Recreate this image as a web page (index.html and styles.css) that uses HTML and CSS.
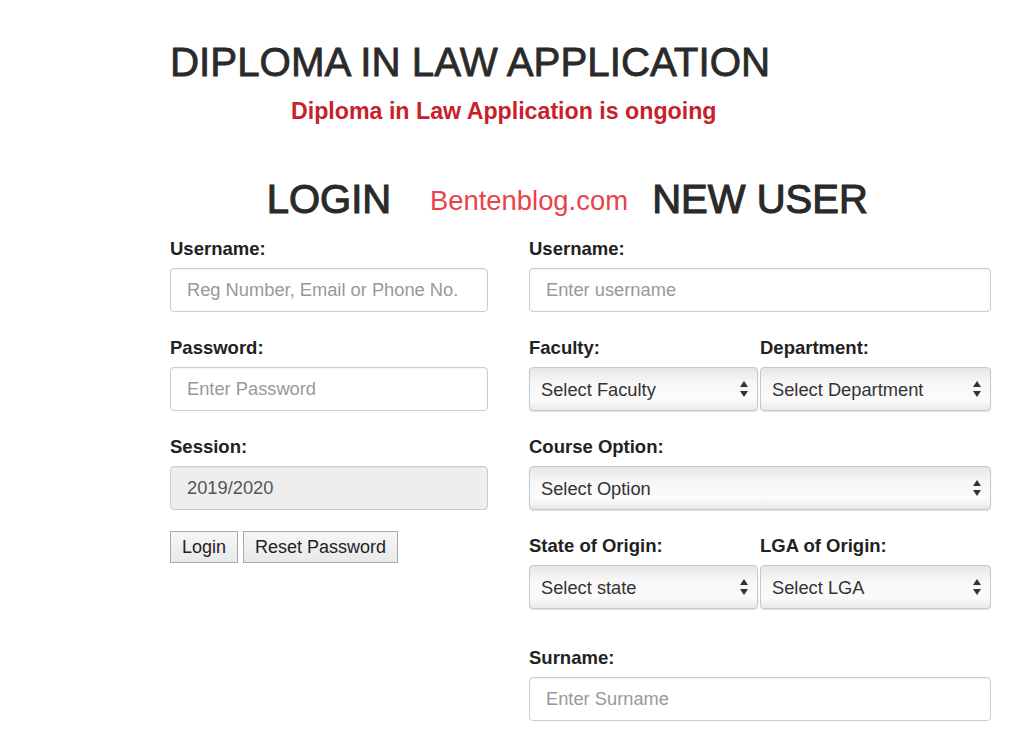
FILE: index.html
```html
<!DOCTYPE html>
<html lang="en-US">
<head>
    <meta charset="UTF-8">
    <meta name="viewport" content="width=device-width">
    <title>Diploma in Law Application</title>
    <link rel="stylesheet" href="styles.css">
</head>
<body>

<div class=page>
  <h1 class=title>DIPLOMA IN LAW APPLICATION</h1>
  <p class=notice>Diploma in Law Application is ongoing</p>

  <div class=forms>
    <span class=watermark>Bentenblog.com</span>

    <form class=login>
      <h2>LOGIN</h2>
      <div class=field>
        <label>Username:</label>
        <input type=text placeholder="Reg Number, Email or Phone No.">
      </div>
      <div class=field>
        <label>Password:</label>
        <input type=password placeholder="Enter Password">
      </div>
      <div class=field>
        <label>Session:</label>
        <input type=text value="2019/2020" readonly class=locked>
      </div>
      <div class=actions>
        <button type=button>Login</button>
        <button type=button>Reset Password</button>
      </div>
    </form>

    <form class=signup>
      <h2>NEW USER</h2>
      <div class=field>
        <label>Username:</label>
        <input type=text placeholder="Enter username">
      </div>
      <div class=pair>
        <div class=field>
          <label>Faculty:</label>
          <div class=select>
            <select><option>Select Faculty</option></select>
            <svg viewBox="0 0 8 16" width=8 height=16><polygon points="4,0 8,6 0,6"/><polygon points="0,10 8,10 4,16"/></svg>
          </div>
        </div>
        <div class=field>
          <label>Department:</label>
          <div class=select>
            <select><option>Select Department</option></select>
            <svg viewBox="0 0 8 16" width=8 height=16><polygon points="4,0 8,6 0,6"/><polygon points="0,10 8,10 4,16"/></svg>
          </div>
        </div>
      </div>
      <div class=field>
        <label>Course Option:</label>
        <div class=select>
          <select><option>Select Option</option></select>
          <svg viewBox="0 0 8 16" width=8 height=16><polygon points="4,0 8,6 0,6"/><polygon points="0,10 8,10 4,16"/></svg>
        </div>
      </div>
      <div class="pair spaced">
        <div class=field>
          <label>State of Origin:</label>
          <div class=select>
            <select><option>Select state</option></select>
            <svg viewBox="0 0 8 16" width=8 height=16><polygon points="4,0 8,6 0,6"/><polygon points="0,10 8,10 4,16"/></svg>
          </div>
        </div>
        <div class=field>
          <label>LGA of Origin:</label>
          <div class=select>
            <select><option>Select LGA</option></select>
            <svg viewBox="0 0 8 16" width=8 height=16><polygon points="4,0 8,6 0,6"/><polygon points="0,10 8,10 4,16"/></svg>
          </div>
        </div>
      </div>
      <div class=field>
        <label>Surname:</label>
        <input type=text placeholder="Enter Surname">
      </div>
    </form>
  </div>
</div>

</body>
</html>
```

FILE: styles.css
```css
body {
    margin: 0;
    background: white;
    color: #222;
    font-family: "Liberation Sans", Arial, sans-serif;
}
.page {
    padding-left: 170px;
}
.title {
    margin: 39px 0 0;
    font-size: 40.3px;
    line-height: 48px;
    font-weight: normal;
    color: #2a2a2a;
    -webkit-text-stroke: 0.8px #2a2a2a;
}
.notice {
    margin: 10px 0 0;
    padding-left: 121px;
    font-size: 23.2px;
    line-height: 28px;
    font-weight: bold;
    color: #c8212b;
}
.forms {
    position: relative;
    display: grid;
    grid-template-columns: 318px 462px;
    column-gap: 41px;
    margin-top: 50px;
}
.watermark {
    position: absolute;
    left: 260px;
    top: 2px;
    font-size: 27.4px;
    line-height: 48px;
    color: #e8424a;
}
h2 {
    margin: 0 0 16px;
    font-size: 40px;
    line-height: 48px;
    font-weight: normal;
    text-align: center;
    color: #2a2a2a;
    -webkit-text-stroke: 1.1px #2a2a2a;
}
.field {
    margin-bottom: 26px;
}
label {
    display: block;
    height: 20px;
    margin-bottom: 9px;
    font-size: 18.5px;
    line-height: 20px;
    font-weight: bold;
    color: #222;
}
input {
    display: block;
    box-sizing: border-box;
    width: 100%;
    height: 44px;
    margin: 0;
    padding: 0 16px;
    border: 1px solid #ccc;
    border-radius: 4px;
    box-shadow: inset 0 1px 1px rgba(0,0,0,0.05);
    font: 18.3px "Liberation Sans", Arial, sans-serif;
    color: #555;
    background: white;
}
input::placeholder {
    color: #999;
}
input.locked {
    background: #eee;
}
.actions {
    display: flex;
    gap: 5px;
    margin-top: -5px;
}
button {
    height: 32px;
    padding: 0 11px;
    border: 1px solid #a9a9a9;
    border-radius: 0;
    background: linear-gradient(#f6f6f6, #e9e9e9);
    font: 18px "Liberation Sans", Arial, sans-serif;
    color: #222;
}
.pair {
    display: grid;
    grid-template-columns: 231px 231px;
}
.pair .field:first-child .select {
    margin-right: 2px;
}
.pair.spaced .field {
    margin-bottom: 39px;
}
.select {
    position: relative;
}
select {
    display: block;
    box-sizing: border-box;
    width: 100%;
    height: 44px;
    margin: 0;
    padding: 0 30px 0 11px;
    -webkit-appearance: none;
    appearance: none;
    border: 1px solid #c8c8c8;
    border-radius: 4px;
    background: linear-gradient(#e6e6e6 0%, #f7f7f7 35%, #fbfbfb 75%, #e9e9e9 100%);
    box-shadow: 0 1px 1px rgba(0,0,0,0.12);
    font: 18.3px "Liberation Sans", Arial, sans-serif;
    color: #333;
}
.select svg {
    position: absolute;
    right: 10px;
    top: 14px;
    fill: #333;
    pointer-events: none;
}
```
